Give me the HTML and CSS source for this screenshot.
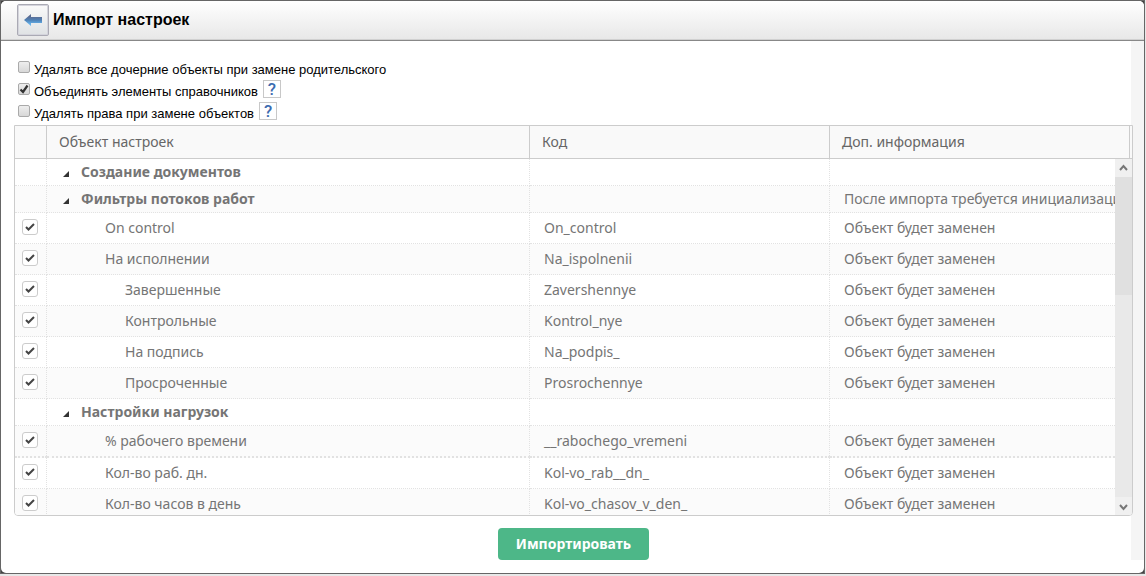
FILE: index.html
```html
<!DOCTYPE html>
<html lang="ru">
<head>
<meta charset="utf-8">
<title>Импорт настроек</title>
<link rel="stylesheet" href="styles.css">
</head>
<body>
<div class="frame">
<div class="window">
  <header class="titlebar">
    <button class="back" type="button" aria-label="Назад">
      <svg width="18" height="12" viewBox="0 0 18 12"><defs><linearGradient id="arrow" x1="0" y1="0" x2="0" y2="1"><stop offset="0.2" stop-color="#5c6c92"/><stop offset="0.5" stop-color="#4f80b4"/><stop offset="0.85" stop-color="#66b4ee"/></linearGradient></defs><path d="M0 6 7 0V3H18V9H7V12Z" fill="url(#arrow)"/></svg>
    </button>
    <h1 class="title">Импорт настроек</h1>
  </header>
  <main class="content">
    <div class="options">
      <div class="option"><input class="check" type="checkbox" id="o1"><label for="o1">Удалять все дочерние объекты при замене родительского</label></div>
      <div class="option"><input class="check" type="checkbox" id="o2" checked><label for="o2">Объединять элементы справочников</label><button class="help" type="button">?</button></div>
      <div class="option"><input class="check" type="checkbox" id="o3"><label for="o3">Удалять права при замене объектов</label><button class="help" type="button">?</button></div>
    </div>
    <section class="grid">
      <div class="grid-head">
        <table class="table head-table">
          <colgroup><col class="c-check"><col><col class="c-code"><col class="c-info-head"></colgroup>
          <thead><tr><th></th><th>Объект настроек</th><th>Код</th><th>Доп. информация</th></tr></thead>
        </table>
      </div>
      <div class="grid-body">
        <div class="rows">
          <table class="table">
            <colgroup><col class="c-check"><col><col class="c-code"><col class="c-info"></colgroup>
            <tbody>
              <tr class="group"><td></td><td><span class="toggle"></span>Создание документов</td><td></td><td></td></tr>
              <tr class="group"><td></td><td><span class="toggle"></span>Фильтры потоков работ</td><td></td><td class="note">После импорта требуется инициализация</td></tr>
              <tr><td><input class="tick" type="checkbox" aria-label="On control" checked></td><td class="l1">On control</td><td>On_control</td><td>Объект будет заменен</td></tr>
              <tr><td><input class="tick" type="checkbox" aria-label="На исполнении" checked></td><td class="l1">На исполнении</td><td>Na_ispolnenii</td><td>Объект будет заменен</td></tr>
              <tr><td><input class="tick" type="checkbox" aria-label="Завершенные" checked></td><td class="l2">Завершенные</td><td>Zavershennye</td><td>Объект будет заменен</td></tr>
              <tr><td><input class="tick" type="checkbox" aria-label="Контрольные" checked></td><td class="l2">Контрольные</td><td>Kontrol_nye</td><td>Объект будет заменен</td></tr>
              <tr><td><input class="tick" type="checkbox" aria-label="На подпись" checked></td><td class="l2">На подпись</td><td>Na_podpis_</td><td>Объект будет заменен</td></tr>
              <tr><td><input class="tick" type="checkbox" aria-label="Просроченные" checked></td><td class="l2">Просроченные</td><td>Prosrochennye</td><td>Объект будет заменен</td></tr>
              <tr class="group"><td></td><td><span class="toggle"></span>Настройки нагрузок</td><td></td><td></td></tr>
              <tr class="last"><td><input class="tick" type="checkbox" aria-label="% рабочего времени" checked></td><td class="l1">% рабочего времени</td><td>__rabochego_vremeni</td><td>Объект будет заменен</td></tr>
              <tr><td><input class="tick" type="checkbox" aria-label="Кол-во раб. дн." checked></td><td class="l1">Кол-во раб. дн.</td><td>Kol-vo_rab__dn_</td><td>Объект будет заменен</td></tr>
              <tr><td><input class="tick" type="checkbox" aria-label="Кол-во часов в день" checked></td><td class="l1">Кол-во часов в день</td><td>Kol-vo_chasov_v_den_</td><td>Объект будет заменен</td></tr>
            </tbody>
          </table>
        </div>
        <div class="scrollbar">
          <div class="arrow arrow-up"><svg width="9" height="7" viewBox="0 0 9 7"><path d="M1 6 4.500 2 8 6" fill="none" stroke="#777" stroke-width="2"/></svg></div>
          <div class="track"><div class="thumb"></div></div>
          <div class="arrow arrow-down"><svg width="9" height="7" viewBox="0 0 9 7"><path d="M1 1 4.500 5 8 1" fill="none" stroke="#777" stroke-width="2"/></svg></div>
        </div>
      </div>
    </section>
    <div class="actions"><button class="import" type="button">Импортировать</button></div>
  </main>
</div>
</div>
</body>
</html>
```
FILE: styles.css
```css
* { box-sizing: border-box; }
body {
  margin: 0;
  height: 100vh;
  padding: 0 1px 2px 0;
  background: #e8e8e8;
  font: 13px "Liberation Sans", Arial, sans-serif;
  color: #000;
}
.frame { height: 100%; border: 1px solid #666; background: #444; }
.window {
  height: 100%;
  display: flex;
  flex-direction: column;
  padding-bottom: 13px;
  border-radius: 5px;
  background: #fff;
  overflow: hidden;
}
.titlebar {
  flex: none;
  height: 40px;
  display: flex;
  align-items: flex-start;
  gap: 4px;
  padding: 3px 16px 0;
  background: linear-gradient(#fff, #e7e7e7);
  border-bottom: 1px solid #888;
  box-shadow: inset 0 -1px #d0d0d0;
}
.back {
  width: 32px;
  height: 32px;
  display: flex;
  align-items: center;
  justify-content: center;
  padding: 0;
  border: 1px solid #aaaab4;
  border-radius: 2px;
  box-shadow: inset 0 0 0 1px #d4d4dc;
  background: linear-gradient(#fafafa, #dfe2e4);
}
.title { margin: 0; font-size: 16px; line-height: 32px; }
.content {
  flex: 1;
  min-height: 0;
  display: flex;
  flex-direction: column;
  padding: 18px 11px 0 13px;
  background: linear-gradient(#f5f5f5, #f5f5f5) right top / 13px 100% no-repeat;
}
.options { flex: none; padding-left: 4px; }
.option { height: 22px; display: flex; align-items: flex-start; }
.option label { padding: 3px 0 0 4px; line-height: 15px; }
.check, .tick { appearance: none; flex: none; margin: 0; background-repeat: no-repeat; background-position: center; }
.check {
  width: 12px;
  height: 12px;
  margin-top: 2px;
  border: 1px solid #aaa;
  border-radius: 2px;
  background-image: linear-gradient(#eee, #d8d8d8);
}
.check:checked {
  background-image: url("data:image/svg+xml,%3Csvg xmlns='http://www.w3.org/2000/svg' width='10' height='10'%3E%3Cpath d='M1.500 5.500 4 8 8.500 1.500' fill='none' stroke='%23333' stroke-width='2.200'/%3E%3C/svg%3E"), linear-gradient(#eee, #d8d8d8);
}
.help {
  width: 18px;
  height: 18px;
  margin: -1px 0 0 5px;
  padding: 0;
  border: 1px solid #c8c8c8;
  background: #fff;
  color: #3b6bb0;
  font: 500 17px/16px Roboto, sans-serif;
}
.grid {
  flex: 1;
  min-height: 0;
  display: flex;
  flex-direction: column;
  border: 1px solid #ccc;
  border-radius: 0 0 4px 4px;
  background: #fff;
  overflow: hidden;
  font: 14px "Noto Sans", "Open Sans", sans-serif;
  color: #757575;
}
.grid-head { flex: none; padding-right: 2px; border-bottom: 1px solid #ccc; background: #f9f9f9; }
.table { width: 100%; table-layout: fixed; border-collapse: separate; border-spacing: 0; }
.c-check { width: 32px; }
.c-code { width: 300px; }
.c-info { width: 285px; }
.c-info-head { width: 300px; }
.table th {
  height: 32px;
  padding: 0 12px;
  border-right: 1px solid #ccc;
  font-weight: 400;
  line-height: 20px;
  text-align: left;
  color: #666;
}
.grid-body { flex: 1; min-height: 0; display: flex; }
.rows { flex: 1; min-width: 0; overflow: hidden; }
.table td {
  height: 31px;
  padding: 0 0 0 14px;
  border-right: 1px dotted #e2e2e2;
  border-bottom: 1px dotted #e2e2e2;
  line-height: 20px;
  white-space: nowrap;
  overflow: hidden;
}
.table td:last-child { border-right: 0; }
.table td:first-child { padding: 0 0 2px 7px; }
.table tr:nth-child(even) td { background: #fbfbfb; }
.table .group td { height: 27px; font-weight: 700; }
.table .group .note { font-weight: 400; }
.table .last td { height: 32px; border-bottom-width: 2px; }
.table .l1 { padding-left: 58px; }
.table .l2 { padding-left: 78px; }
.toggle {
  display: inline-block;
  width: 6px;
  height: 6px;
  margin: 0 12px 0 2px;
  background: #333;
  clip-path: polygon(100% 0, 100% 100%, 0 100%);
}
.tick {
  display: block;
  width: 16px;
  height: 16px;
  border: 1px solid #ccc;
  border-radius: 3px;
  background-color: #fff;
}
.tick:checked {
  background-image: url("data:image/svg+xml,%3Csvg xmlns='http://www.w3.org/2000/svg' width='10' height='10'%3E%3Cpath d='M1 5 3.500 7.500 9 2' fill='none' stroke='%23444' stroke-width='2'/%3E%3C/svg%3E");
}
.scrollbar { flex: none; width: 17px; display: flex; flex-direction: column; background: #e9e9e9; }
.arrow { height: 18px; display: flex; align-items: center; justify-content: center; background: #f0f0f0; }
.arrow-up { padding-bottom: 2px; }
.arrow-down { padding-top: 2px; }
.track { flex: 1; }
.thumb { height: 37%; background: #e0e0e0; }
.actions { flex: none; display: flex; justify-content: center; padding-top: 12px; }
.import {
  height: 32px;
  padding: 0 18px 2px;
  border: 0;
  border-radius: 4px;
  background: #4db788;
  color: #fff;
  font: bold 14px "Noto Sans", "Open Sans", sans-serif;
}
```
